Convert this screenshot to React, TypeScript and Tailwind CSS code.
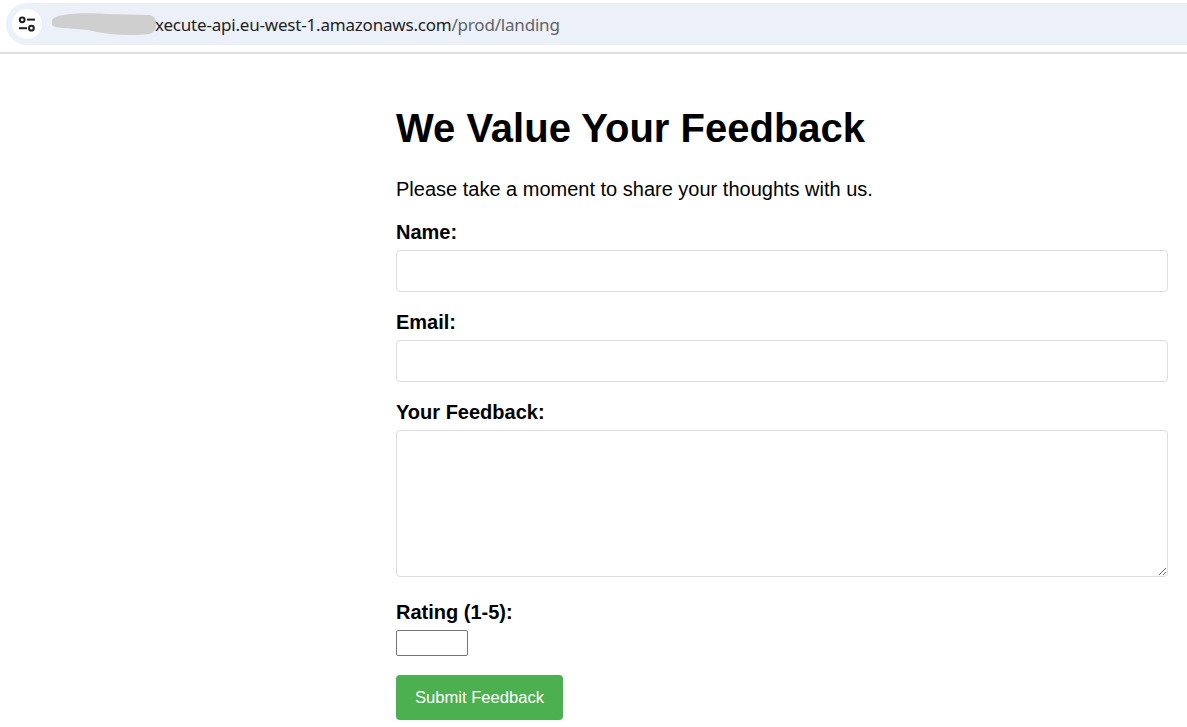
export default function App() {
  return (
    <div className="min-h-[727px] overflow-hidden bg-white font-['Liberation_Sans',Arial,sans-serif] text-black">
      <header className="h-[54px] border-b-2 border-[#e0e0e0] pt-[3px]">
        <div className="ml-[6px] flex h-[42px] items-center rounded-l-[21px] bg-[#ecf0f9] pl-[6px]">
          <div className="flex h-[30px] w-[30px] items-center justify-center rounded-full bg-white">
            <svg width="18" height="16" viewBox="0 0 18 16" fill="none" stroke="#1f1f1f" strokeWidth="2">
              <circle cx="4.2" cy="3.8" r="2.4" />
              <path d="M9 3.6h8" />
              <path d="M1 12.2h8" />
              <circle cx="13.4" cy="12.2" r="2.4" />
            </svg>
          </div>
          <svg width="108" height="24" viewBox="0 0 108 24" className="ml-[9px] mr-[-4px]">
            <path
              d="M1 8 C3 3 25 0 55 2 L98 3 C108 4 108 20 98 22 C80 24 55 23 38 18 C22 16 4 17 1 13 Z"
              fill="#cfcfcf"
            />
          </svg>
          <span className="font-['Noto_Sans',sans-serif] text-[17px] leading-none tracking-[-0.2px] text-[#1f1f1f]">
            xecute-api.eu-west-1.amazonaws.com<span className="text-[#5f6368]">/prod/landing</span>
          </span>
        </div>
      </header>
      <main className="ml-[396px] w-[772px] pt-[51px]">
        <h1 className="text-[40px] font-bold leading-[46px]">We Value Your Feedback</h1>
        <p className="mt-[27px] text-[20px] leading-[23px]">Please take a moment to share your thoughts with us.</p>
        <form className="mt-[20px] flex flex-col">
          <label className="text-[20px] font-bold leading-[23px]">Name:</label>
          <input type="text" className="mt-[6px] h-[42px] w-full rounded-[4px] border border-[#dddddd] bg-white" />
          <label className="mt-[19px] text-[20px] font-bold leading-[23px]">Email:</label>
          <input type="email" className="mt-[6px] h-[42px] w-full rounded-[4px] border border-[#dddddd] bg-white" />
          <label className="mt-[19px] text-[20px] font-bold leading-[23px]">Your Feedback:</label>
          <textarea className="mt-[6px] block h-[147px] w-full rounded-[4px] border border-[#dddddd] bg-white" />
          <label className="mt-[24px] text-[20px] font-bold leading-[23px]">Rating (1-5):</label>
          <input type="number" min={1} max={5} className="mt-[6px] h-[26px] w-[72px] rounded-[2px] border border-[#767676] bg-white" />
          <button type="button" className="mt-[19px] h-[45px] w-[167px] rounded-[4px] bg-[#4caf50] pt-[1px] text-[16.6px] text-white">Submit Feedback</button>
        </form>
      </main>
    </div>
  );
}
